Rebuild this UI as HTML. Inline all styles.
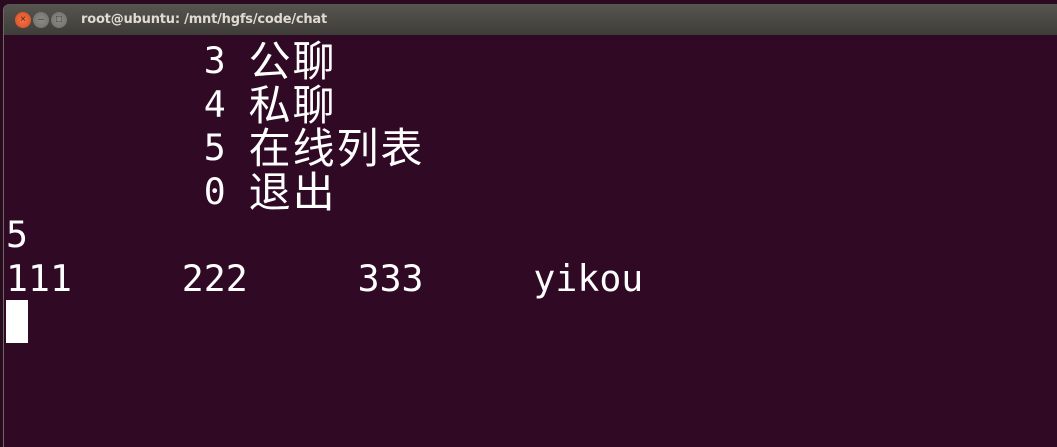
<!DOCTYPE html><html><head><style>
body{margin:0;width:1057px;height:447px;background:#2a0a1f;overflow:hidden;position:relative}
#win{position:absolute;left:3px;top:4px;width:1054px;height:443px;background:#300a24;border-left:1px solid #6b6b66;border-radius:6px 0 0 0;overflow:hidden}
#tb{height:31px;background:linear-gradient(#56554f,#3e3d39);position:relative}
#tb .t{position:absolute;left:77px;top:8px;font:bold 13px "DejaVu Sans","Liberation Sans",sans-serif;color:#dfdbd2;letter-spacing:-0.2px}
.b{position:absolute;top:8px;width:16px;height:16px;border-radius:50%;font:10px sans-serif;text-align:center;line-height:16px;color:#3c3b37}
#term{position:absolute;left:2px;top:35px;font:36.5px "DejaVu Sans Mono","Liberation Mono","Noto Sans CJK SC",monospace;color:#fff;line-height:43.5px;white-space:pre}
.c{display:inline-block;width:43.9px;text-align:center;font-size:42px;line-height:43.5px;vertical-align:top;font-family:"Noto Sans CJK SC",sans-serif;position:relative;top:-2px}
#cur{position:absolute;left:2px;top:296px;width:22px;height:43px;background:#fff}
</style></head><body>
<div id="win"><div id="tb">
<div class="b" style="left:11px;background:radial-gradient(#f0774a,#d9481d);color:#5a1a08">×</div>
<div class="b" style="left:29px;background:radial-gradient(#8c8b85,#6f6e69)">–</div>
<div class="b" style="left:47px;background:radial-gradient(#8c8b85,#6f6e69)">□</div>
<div class="t">root@ubuntu: /mnt/hgfs/code/chat</div></div>
<div id="term">         3 <span class="c">公</span><span class="c">聊</span>
         4 <span class="c">私</span><span class="c">聊</span>
         5 <span class="c">在</span><span class="c">线</span><span class="c">列</span><span class="c">表</span>
         0 <span class="c">退</span><span class="c">出</span>
5
111     222     333     yikou</div>
<div id="cur"></div></div>
</body></html>
